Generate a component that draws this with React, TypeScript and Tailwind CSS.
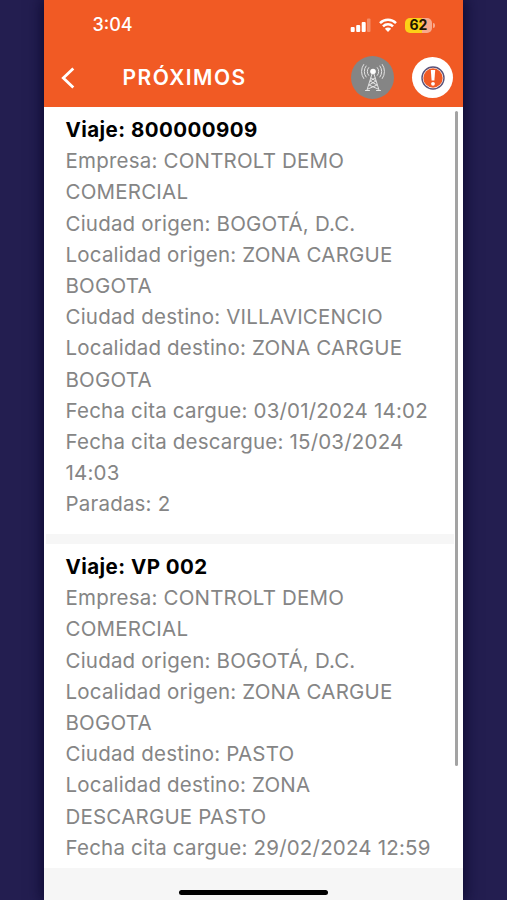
type Trip = { title: string; lines: string[] };

const trips: Trip[] = [
  {
    title: "Viaje: 800000909",
    lines: [
      "Empresa: CONTROLT DEMO",
      "COMERCIAL",
      "Ciudad origen: BOGOTÁ, D.C.",
      "Localidad origen: ZONA CARGUE",
      "BOGOTA",
      "Ciudad destino: VILLAVICENCIO",
      "Localidad destino: ZONA CARGUE",
      "BOGOTA",
      "Fecha cita cargue: 03/01/2024 14:02",
      "Fecha cita descargue: 15/03/2024",
      "14:03",
      "Paradas: 2",
    ],
  },
  {
    title: "Viaje: VP 002",
    lines: [
      "Empresa: CONTROLT DEMO",
      "COMERCIAL",
      "Ciudad origen: BOGOTÁ, D.C.",
      "Localidad origen: ZONA CARGUE",
      "BOGOTA",
      "Ciudad destino: PASTO",
      "Localidad destino: ZONA",
      "DESCARGUE PASTO",
      "Fecha cita cargue: 29/02/2024 12:59",
    ],
  },
];

function StatusBar() {
  return (
    <div className="flex h-[50px] items-center justify-between pl-[49px] pr-[28px]">
      <span className="text-[18px] font-medium leading-none">3:04</span>
      <div className="flex items-center">
        <svg width="21" height="14" viewBox="0 0 21 14" fill="#fff">
          <rect x="0.7" y="9" width="4" height="5" rx="1" />
          <rect x="6.2" y="7" width="4" height="7" rx="1" />
          <rect x="11.7" y="4" width="4" height="10" rx="1" />
          <rect x="17" y="0.5" width="3.5" height="13.5" rx="1" opacity="0.3" />
        </svg>
        <svg className="ml-2" width="18" height="14" viewBox="0 0 18 14" fill="none" stroke="#fff" strokeWidth="2.5">
          <path d="M1 5.1a11.3 11.3 0 0 1 16 0" />
          <path d="M4 8.3a7.1 7.1 0 0 1 10 0" />
          <path d="M9 14 5.9 10.8a4.4 4.4 0 0 1 6.2 0Z" fill="#fff" stroke="none" />
        </svg>
        <div className="ml-2 flex h-[15px] w-[27px] items-center justify-center rounded-[5px] bg-[linear-gradient(90deg,#fcd117_63%,#f9a98c_63%)] text-[14px] font-bold leading-none text-[#211500]">
          62
        </div>
        <div className="ml-px h-[5px] w-[1.5px] rounded-r bg-[#f9a98c]" />
      </div>
    </div>
  );
}

function TowerIcon() {
  return (
    <svg width="24" height="30" viewBox="0 0 24 30" fill="none" stroke="#e4e4e4" strokeLinecap="round">
      <circle cx="12" cy="8.5" r="2.8" fill="#fff" stroke="none" />
      <path d="M11 11 6 27M13 11l5 16M10 15l5 3-7 4 9 4M14 15l-5 3 7 4-9 4M4.5 27.5h4M15.5 27.5h4" strokeWidth="1" />
      <path d="M7.7 4.6a5.8 5.8 0 0 0 0 7.8M5.1 3a9 9 0 0 0 0 11M2.7 1.5a12 12 0 0 0 0 14M16.3 4.6a5.8 5.8 0 0 1 0 7.8M18.9 3a9 9 0 0 1 0 11M21.3 1.5a12 12 0 0 1 0 14" strokeWidth="1" />
    </svg>
  );
}

function AlertIcon() {
  return (
    <svg width="24" height="24" viewBox="0 0 24 24">
      <circle cx="12" cy="12" r="11" fill="#fff" stroke="#5b5278" strokeWidth="1.4" />
      <circle cx="12" cy="12" r="9.7" fill="#f15a24" />
      <path d="M9.8 4h4.4l-.8 10.6h-2.8Z" fill="#fff" />
      <circle cx="12" cy="17.8" r="1.9" fill="#fff" />
    </svg>
  );
}

export default function App() {
  return (
    <div className="flex h-[900px] w-[507px] justify-center overflow-hidden bg-[#231e50] pr-px font-['Inter','Liberation_Sans',sans-serif]">
      <div className="flex h-full w-[419px] flex-col bg-[#f6f6f6] shadow-[0_0_14px_2px_#0c0930]">
        <header className="h-[107px] shrink-0 bg-[#f15a24] text-white">
          <StatusBar />
          <div className="flex h-[55px] items-center pl-[17px] pr-[9.5px]">
            <svg width="15" height="22" viewBox="0 0 15 22" fill="none" stroke="#fff" strokeWidth="2.8">
              <path d="M12.3 1.5 2.3 11l10 9.5" />
            </svg>
            <h1 className="ml-[47px] text-[21px] font-semibold leading-none tracking-[1.45px]">PRÓXIMOS</h1>
            <div className="ml-auto flex items-center gap-[18px]">
              <div className="flex size-[43px] items-center justify-center rounded-full bg-[#858585]">
                <TowerIcon />
              </div>
              <div className="flex size-[41px] items-center justify-center rounded-full bg-white">
                <AlertIcon />
              </div>
            </div>
          </div>
        </header>
        <main className="relative h-[761px] overflow-hidden bg-white text-[20.5px] leading-[31.2px] tracking-[0.2px] text-[#858585]">
          <div className="ml-[2px] mr-[9px] flex flex-col gap-[10px] bg-[#f6f6f6]">
            {trips.map((trip) => (
              <section key={trip.title} className="shrink-0 whitespace-nowrap bg-white pb-[14.4px] pl-[20px] pt-[7px]">
                <h2 className="font-bold tracking-[0.45px] text-black">{trip.title}</h2>
                {trip.lines.map((line, i) => (
                  <p key={i}>{line}</p>
                ))}
              </section>
            ))}
          </div>
          <div className="absolute right-[5px] top-[4px] h-[655px] w-[3px] rounded-full bg-[#a3a3a3]" />
        </main>
        <footer className="flex flex-1 items-end justify-center pb-[5px]">
          <div className="h-[5px] w-[149px] rounded-full bg-black" />
        </footer>
      </div>
    </div>
  );
}
